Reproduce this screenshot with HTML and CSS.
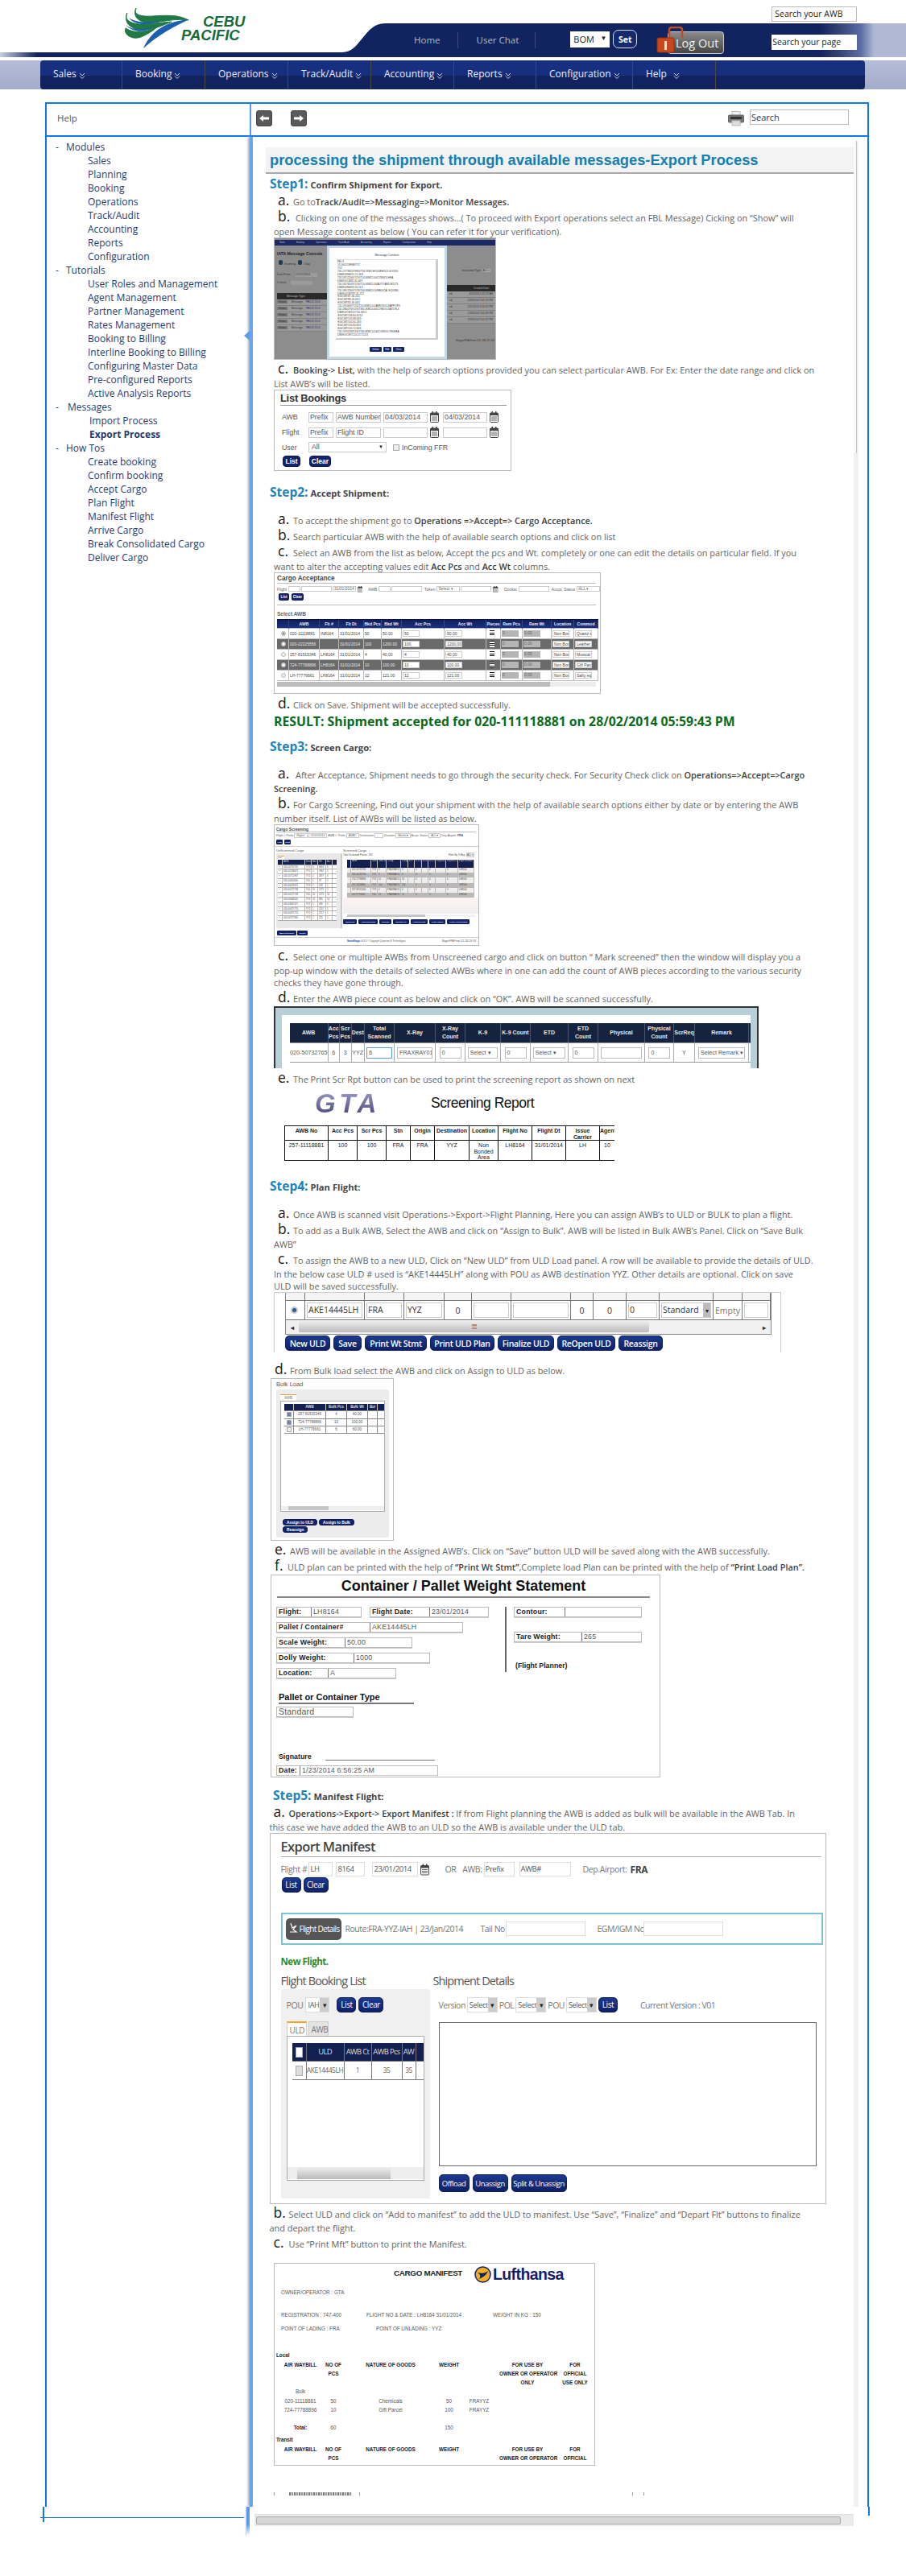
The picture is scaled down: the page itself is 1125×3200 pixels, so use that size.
FILE: index.html
```html
<!DOCTYPE html>
<html lang="en">
<head>
<meta charset="utf-8">
<title>Help - Export Process</title>
<link rel="stylesheet" href="styles.css">
</head>
<body>
<svg class="defs" width="0" height="0"><defs>
<symbol id="cal" viewBox="0 0 11 14"><rect x="0.5" y="2" width="10" height="11.5" rx="1" fill="#fff" stroke="#444"/><rect x="0.5" y="2" width="10" height="3" fill="#444"/><rect x="2.5" y="0" width="1.5" height="3.5" fill="#444"/><rect x="7" y="0" width="1.5" height="3.5" fill="#444"/><path d="M2 7h7M2 9h7M2 11h7" stroke="#666" stroke-width="1"/></symbol>
<symbol id="chev" viewBox="0 0 8 9"><path d="M1 1l3 3 3-3M1 4.5l3 3 3-3" fill="none" stroke="#cfd5ea" stroke-width="1"/></symbol>
</defs></svg>

<header class="hdr">
  <svg class="hdr-bg" width="1125" height="71" viewBox="0 0 1125 71">
    <defs>
      <linearGradient id="bar" x1="0" x2="1" y1="0" y2="0"><stop offset="0" stop-color="#c9cede"/><stop offset="0.04" stop-color="#12245f"/><stop offset="0.905" stop-color="#12245f"/><stop offset="0.925" stop-color="#34406f"/><stop offset="0.95" stop-color="#5a6ca6"/><stop offset="0.965" stop-color="#b0b8d4"/><stop offset="1" stop-color="#b0b8d4"/></linearGradient>
    </defs>
    <path d="M0 65H425C448 65 452 29 478 29H1125V71H0Z" fill="url(#bar)"/>
  </svg>
  <a class="logo">
    <svg width="180" height="70" viewBox="0 0 180 70">
      <g fill="#1f7a45" stroke="#1f7a45" stroke-width="1">
      <path d="M29 10C25 18 34 21 50 20C66 19 82 18 94 25C80 23 66 26 52 28C38 30 23 24 29 10Z"/>
      <path d="M18 16C13 25 24 31 40 30C52 29 62 28 73 27C61 32 48 38 35 37C22 36 13 28 18 16Z"/>
      <path d="M16 35C13 43 24 50 35 46C43 43 50 38 56 33C44 39 28 43 16 35Z"/>
      </g>
      <path d="M38 60C46 43 60 27 95 24C82 31 66 36 38 60Z" fill="#1b5fae"/>
      <path d="M16 31C24 37 36 38 50 33C40 41 26 41 16 31ZM20 22C30 29 44 28 60 26C46 31 28 33 20 22Z" fill="#1b5fae"/>
      <text class="logo-t" x="112" y="33">CEBU</text>
      <text class="logo-t" x="85" y="50">PACIFIC</text>
    </svg>
  </a>
  <nav class="toplinks"><a class="tl tl-a">Home</a><a class="tl tl-b">User Chat</a></nav>
  <span class="stn">BOM<i class="stn-c">▼</i></span>
  <button class="setb">Set</button>
  <div class="logout">
    <svg class="lock" width="34" height="33" viewBox="0 0 34 33"><path d="M16 14V4C16 2 17 1 19 1H29C31 1 32 2 32 4V14" fill="none" stroke="#c8481e" stroke-width="2.5"/><rect x="1" y="14" width="21" height="18" rx="2" fill="#c8481e" stroke="#8f2c0c"/><rect x="10" y="18" width="3" height="11" fill="#f5e6d8"/></svg>
    Log Out
  </div>
  <div class="searches"><div class="sbox">Search your AWB</div><div class="sbox sbox-p">Search your page</div></div>
</header>

<div class="navband">
  <nav class="nav">
    <a class="ni ni1">Sales<svg class="ch"><use href="#chev"/></svg></a>
    <a class="ni ni2">Booking<svg class="ch"><use href="#chev"/></svg></a>
    <a class="ni ni3">Operations<svg class="ch"><use href="#chev"/></svg></a>
    <a class="ni ni3">Track/Audit<svg class="ch"><use href="#chev"/></svg></a>
    <a class="ni ni3">Accounting<svg class="ch"><use href="#chev"/></svg></a>
    <a class="ni ni4">Reports<svg class="ch"><use href="#chev"/></svg></a>
    <a class="ni ni5">Configuration<svg class="ch"><use href="#chev"/></svg></a>
    <a class="ni ni4">Help<svg class="ch ch-w"><use href="#chev"/></svg></a>
  </nav>
</div>

<section class="frame">
  <div class="fr-top">
    <div class="t-left">Help</div>
    <div class="t-right">
      <button class="pg"><svg width="14" height="10" viewBox="0 0 14 10"><path d="M1 5l5-4v2.500h7v3H6V9z" fill="#fff"/></svg></button>
      <button class="pg pg2"><svg width="14" height="10" viewBox="0 0 14 10"><path d="M13 5L8 1v2.500H1v3h7V9z" fill="#fff"/></svg></button>
      <svg class="printer" width="20" height="19" viewBox="0 0 20 19"><rect x="5" y="0.500" width="10" height="6" fill="#f2f2f2" stroke="#bbb"/><rect x="0.500" y="5" width="19" height="9" rx="1" fill="#777" stroke="#666"/><rect x="3" y="7" width="14" height="3" fill="#333"/><rect x="5" y="12" width="10" height="6" fill="#ddd" stroke="#bbb"/></svg>
      <div class="tsearch">Search</div>
    </div>
  </div>
  <div class="fr-body">
    <aside class="tree">
      <div class="th">Modules</div>
      <ul class="tl-list"><li>Sales</li><li>Planning</li><li>Booking</li><li>Operations</li><li>Track/Audit</li><li>Accounting</li><li>Reports</li><li>Configuration</li></ul>
      <div class="th">Tutorials</div>
      <ul class="tl-list"><li>User Roles and Management</li><li>Agent Management</li><li>Partner Management</li><li>Rates Management</li><li>Booking to Billing</li><li>Interline Booking to Billing</li><li>Configuring Master Data</li><li>Pre-configured Reports</li><li>Active Analysis Reports</li></ul>
      <div class="th th-m">Messages</div>
      <ul class="tl-list tl-m"><li>Import Process</li><li class="cur">Export Process</li></ul>
      <div class="th">How Tos</div>
      <ul class="tl-list"><li>Create booking</li><li>Confirm booking</li><li>Accept Cargo</li><li>Plan Flight</li><li>Manifest Flight</li><li>Arrive Cargo</li><li>Break Consolidated Cargo</li><li>Deliver Cargo</li></ul>
    </aside>
    <div class="fr-div"></div>
    <main class="doc">
      <h1 class="ttl">processing the shipment through available messages-Export Process</h1>

      <h3 class="step m1"><span class="sn">Step1:</span> Confirm Shipment for Export.</h3>
      <p class="p m4"><span class="l1"><b class="mk">a.</b>Go to<strong>Track/Audit=&gt;Messaging=&gt;Monitor Messages.</strong></span></p>
      <p class="p m5"><span class="l1"><b class="mk mk-w">b.</b>Clicking on one of the messages shows...( To proceed with Export operations select an FBL Message) Cicking on “Show” will</span>open Message content as below ( You can refer it for your verification).</p>

      <div class="shot s1">
        <div class="s1-nav"><span>Sales</span><span>Booking</span><span>Operations</span><span>Track/Audit</span><span>Accounting</span><span>Reports</span><span>Configuration</span><span>Help</span></div>
        <div class="s1-grid">
          <div class="s1-l">
            <div class="s1-title">IATA Message Console</div>
            <div class="s1-ic"><i></i>Incoming <i></i>Outg</div>
            <div class="s1-f">Date From: <u>01/12/2014</u></div>
            <div class="s1-f">Criteria <u>&nbsp;</u></div>
            <div class="s1-th">Message Type</div>
            <div class="s1-tr"><b>Show</b>Message <em>FBL/3 1/LX</em></div>
            <div class="s1-tr"><b>Show</b>Message <em>FBL/3 1/LX</em></div>
            <div class="s1-tr"><b>Show</b>Message <em>FBL/3 1/LX</em></div>
            <div class="s1-tr"><b>Show</b>Message <em>FBL/3 1/LX</em></div>
            <div class="s1-tr"><b>Show</b>Message <em>FBL/3 1/LX</em></div>
          </div>
          <div class="s1-m">
            <div class="s1-mt">Message Content</div>
            <div class="s1-box">
FBL/3<br>1/LX001/19FEB/YYZ<br>YYZ<br>724-17779821YVR/0/T34.1KMC/HOUSEHOLD GOODS<br>DIM/KG/INH/21-21-26/3<br>724-18712206YYZ/0/T14.0KMC1.00/CONSOL/HEA<br>DIM/KG/CM/82-42-44/1<br>724-19176503YYZ/6/T10.0KMC0.34/AUTO AND BOLTS<br>DIM/KG/INH/32-32-21/1<br>724-16912260YYZ/6/T44.0KMC0.50/MEDICAL EQUI/BU<br>DIM/KG/CMT/87-41-11/1<br>/KG/CMT/87-34-10/1<br>/KG/CMT/88-43-40/1<br>/KG/CMT/82-44-44/1<br>724-19706307YZ/6/T24.0KMC0.01/AEROSOLS/APP/CPS<br>724-18902795YZ/6/T380.1KMC6.00/CONSOL/DATION-4<br>DIM/KG/CMT/117-90-93/12<br>/KG/CMT/108-90-91/13<br>/KG/CMT/105-88-60/3<br>/KG/CMT/105-92-28/3<br>/KG/CMT/105-80-85/1<br>/KG/CMT/105-72-60/4<br>724-19701284YZ/6/T180.0KMC14.00/CONSOL/TEDHEA<br>DIM/KG/CMT/120-117-115/3
            </div>
            <div class="s1-btns"><span>Delete</span><span>Edit</span><span>Close</span></div>
          </div>
          <div class="s1-r">
            <div class="s1-cm">munication Type: <u>ALL ▾</u></div>
            <div class="s1-th s1-th-r"><span>Created Date</span></div>
            <div class="s1-tr s1-tr-r">ed <span>3/1/2014 1:20:27 AM</span></div>
            <div class="s1-tr s1-tr-r">ed <span>2/28/2014 9:01:19 PM</span></div>
            <div class="s1-tr s1-tr-r">ed <span>2/21/2014 8:24:31 PM</span></div>
            <div class="s1-tr s1-tr-r">ed <span>2/18/2014 9:11:09 PM</span></div>
            <div class="s1-tr s1-tr-r">ed <span>2/18/2014 9:10:37 PM</span></div>
            <div class="s1-foot">Magpa/FRA From 121.182.29.118</div>
          </div>
        </div>
      </div>

      <p class="p m5"><span class="l1"><b class="mk">c.</b><strong>Booking-&gt; List,</strong> with the help of search options provided you can select particular AWB. For Ex: Enter the date range and click on</span>List AWB’s will be listed.</p>

      <div class="shot lb">
        <div class="lb-t">List Bookings</div>
        <div class="lb-r"><span>AWB</span><span class="f">Prefix</span><span class="f">AWB Number</span><span class="f">04/03/2014</span><svg class="cal"><use href="#cal"/></svg><span class="f">04/03/2014</span><svg class="cal"><use href="#cal"/></svg></div>
        <div class="lb-r"><span>Flight</span><span class="f">Prefix</span><span class="f">Flight ID</span><span class="f"></span><svg class="cal"><use href="#cal"/></svg><span class="f"></span><svg class="cal"><use href="#cal"/></svg></div>
        <div class="lb-u"><span class="lb-ul">User</span><span class="f lb-sel">All<i>▼</i></span><span class="cb"></span><span class="lb-ff">InComing FFR</span></div>
        <div class="lb-b"><button class="btn lb-b1">List</button><button class="btn lb-b2">Clear</button></div>
      </div>

      <h3 class="step m15"><span class="sn">Step2:</span> Accept Shipment:</h3>
      <p class="p m17"><span class="l1"><b class="mk">a.</b>To accept the shipment go to <strong>Operations =&gt;Accept=&gt; Cargo Acceptance.</strong></span></p>
      <p class="p m5"><span class="l1"><b class="mk">b.</b>Search particular AWB with the help of available search options and click on list</span></p>
      <p class="p m5"><span class="l1"><b class="mk">c.</b>Select an AWB from the list as below, Accept the pcs and Wt. completely or one can edit the details on particular field. If you</span>want to alter the accepting values edit <strong>Acc Pcs</strong> and <strong>Acc Wt</strong> columns.</p>

      <div class="shot ca">
        <div class="ca-t">Cargo Acceptance</div>
        <div class="ca-f"><span>Flight</span><u class="u1"></u><u class="u2"></u><u class="u3">31/01/2014</u><svg class="cal cal-s"><use href="#cal"/></svg><span>AWB</span><u class="u1"></u><u class="u2"></u><span>Token</span><u class="u3">Select ▾</u><u class="u2"></u><svg class="cal cal-s"><use href="#cal"/></svg><span>Docket</span><u class="u2"></u><span>Accpt. Status</span><u class="u3">ALL ▾</u></div>
        <div class="ca-b"><button class="btn">List</button><button class="btn">Clear</button></div>
        <div class="ca-s">Select AWB</div>
        <div class="ca-tb">
          <div class="ca-r ca-h"><span></span><span>AWB</span><span>Flt #</span><span>Flt Dt</span><span>Bkd Pcs</span><span>Bkd Wt</span><span>Acc Pcs</span><span>Acc Wt</span><span>Pieces</span><span>Rem Pcs</span><span>Rem Wt</span><span>Location</span><span>Commod</span></div>
          <div class="ca-r"><span><i class="rd rd-on"></i></span><span>020-11118881</span><span>IN8164</span><span>31/01/2014</span><span>50</span><span>50.00</span><span><u class="ci">50</u></span><span><u class="ci">50.00</u></span><span><i class="li"></i></span><span><u class="cg">0</u></span><span><u class="cg">0.00</u></span><span><u class="ci">Non Bond</u></span><span><u class="ci">Quartz and</u></span></div>
          <div class="ca-r ca-d"><span><i class="rd"></i></span><span>020-22225556</span><span></span><span>31/01/2014</span><span>100</span><span>1200.00</span><span><u class="ci">100</u></span><span><u class="ci">1200.00</u></span><span><i class="li"></i></span><span><u class="cg">0</u></span><span><u class="cg">0.00</u></span><span><u class="ci">Non Bond</u></span><span><u class="ci">Leather, lea</u></span></div>
          <div class="ca-r"><span><i class="rd"></i></span><span>257-81515346</span><span>LH8164</span><span>31/01/2014</span><span>4</span><span>40.00</span><span><u class="ci">4</u></span><span><u class="ci">40.00</u></span><span><i class="li"></i></span><span><u class="cg">0</u></span><span><u class="cg">0.00</u></span><span><u class="ci">Non Bond</u></span><span><u class="ci">Musical in</u></span></div>
          <div class="ca-r ca-d"><span><i class="rd"></i></span><span>724-77788896</span><span>LH8164</span><span>31/01/2014</span><span>10</span><span>100.00</span><span><u class="ci">10</u></span><span><u class="ci">100.00</u></span><span><i class="li"></i></span><span><u class="cg">0</u></span><span><u class="cg">0.00</u></span><span><u class="ci">Non Bond</u></span><span><u class="ci">Gift Parcel</u></span></div>
          <div class="ca-r"><span><i class="rd"></i></span><span>LH-77776661</span><span>LH8164</span><span>31/01/2014</span><span>12</span><span>121.00</span><span><u class="ci">12</u></span><span><u class="ci">121.00</u></span><span><i class="li"></i></span><span><u class="cg">0</u></span><span><u class="cg">0.00</u></span><span><u class="ci">Non Bond</u></span><span><u class="ci">Safty equip</u></span></div>
        </div>
        <div class="ca-sb"><i></i></div>
      </div>

      <p class="p m6"><span class="l1"><b class="mk">d.</b>Click on Save. Shipment will be accepted successfully.</span></p>
      <div class="result">RESULT: Shipment accepted for 020-111118881 on 28/02/2014 05:59:43 PM</div>

      <h3 class="step m9"><span class="sn">Step3:</span> Screen Cargo:</h3>
      <p class="p m17"><span class="l1"><b class="mk mk-w">a.</b>After Acceptance, Shipment needs to go through the security check. For Security Check click on <strong>Operations=&gt;Accept=&gt;Cargo</strong></span><strong>Screening.</strong></p>
      <p class="p m5"><span class="l1"><b class="mk">b.</b>For Cargo Screening, Find out your shipment with the help of available search options either by date or by entering the AWB</span>number itself. List of AWBs will be listed as below.</p>

      <div class="shot cs">
        <div class="cs-t">Cargo Screening</div>
        <div class="cs-f">Flight #:Prefix <u>Flight#</u> <u>01/01/2014</u> AWB #: Prefix <u>AWB#</u> Destination <u>&nbsp;&nbsp;&nbsp;&nbsp;&nbsp;</u> Duration <u>Month ▾</u> Accpt. Status <u>ALL ▾</u> Dep.Airport: <b>FRA</b></div>
        <div class="cs-b"><button class="btn">List</button><button class="btn">Clear</button></div>
        <div class="cs-m">
          <div class="cs-l">
            <div class="cs-h">UnScreened Cargo</div>
            <div class="cs-pan">
              <div class="cs-tab">ULD</div>
              <div class="cs-lr cs-lh"><span></span><span>AWB</span><span>Dest</span><span>Bkd</span><span>Wt</span><span>Acc</span></div>
              <div class="cs-lr"><span>□</span><span>020-50732765</span><span>YYZ</span><span>6</span><span>8063</span><span>6</span></div>
              <div class="cs-lr"><span>□</span><span>020-50738672</span><span>YYZ</span><span>1</span><span>1967</span><span>1</span></div>
              <div class="cs-lr"><span>□</span><span>020-50712967</span><span>YYZ</span><span>4</span><span>2877</span><span>4</span></div>
              <div class="cs-lr"><span>□</span><span>020-60032600</span><span>YUL</span><span>5</span><span>37</span><span>5</span></div>
              <div class="cs-lr"><span>□</span><span>020-60078371</span><span>YYZ</span><span>1</span><span>518</span><span>1</span></div>
              <div class="cs-lr"><span>□</span><span>020-60172738</span><span>YUL</span><span>10</span><span>1275</span><span>5</span></div>
              <div class="cs-lr"><span>□</span><span>020-60172738</span><span>YUL</span><span>10</span><span>1275</span><span>10</span></div>
              <div class="cs-lr"><span>□</span><span>020-60948141</span><span>YYZ</span><span>10</span><span>985</span><span>10</span></div>
              <div class="cs-lr"><span>□</span><span>020-63847471</span><span>YYZ</span><span>5</span><span>489</span><span>5</span></div>
              <div class="cs-lr"><span>□</span><span>020-60475770</span><span>YYZ</span><span>1</span><span>2517</span><span>1</span></div>
              <div class="cs-lr"><span>□</span><span>020-60475770</span><span>YYZ</span><span>1</span><span>2517</span><span>1</span></div>
              <div class="cs-lr"><span>□</span><span>020-60757965</span><span>YYZ</span><span>1</span><span>125</span><span>1</span></div>
            </div>
            <div class="cs-bb"><button class="btn">Mark Screened</button><button class="btn">Reject</button></div>
          </div>
          <div class="cs-rt">
            <div class="cs-h">Screened Cargo</div>
            <div class="cs-tot"><span>Total Screened Pieces: 132</span><span>Filter By X-Ray: <u>ALL ▾</u></span></div>
            <div class="cs-tw">
              <div class="cs-rr cs-rh"><span></span><span>AWB</span><span>Dest</span><span>Total Scanned</span><span>X-Ray</span><span>X-Ray Count</span><span>K-9</span><span>K-9 Count</span><span>ETD</span><span>ETD Count</span><span>Physical</span><span>Physical Count</span><span>Flight Number</span></div>
              <div class="cs-rr"><span>□</span><span>020-50732765</span><span>YYZ</span><span>3</span><span>FRAXRAY01</span><span>3</span><span></span><span>0</span><span></span><span>0</span><span></span><span>0</span><span>LH8164</span></div>
              <div class="cs-rr cs-g"><span>□</span><span>020-50732765</span><span>YYZ</span><span>3</span><span>FRAXRAY01</span><span>3</span><span></span><span>0</span><span></span><span>0</span><span></span><span>0</span><span>LH8164</span></div>
              <div class="cs-rr"><span>□</span><span>724-77788896</span><span>YYZ</span><span>10</span><span>FRAXRAY01</span><span>10</span><span></span><span>0</span><span></span><span>0</span><span></span><span>0</span><span>LH8164</span></div>
              <div class="cs-rr cs-g"><span>□</span><span>257-11118881</span><span>YYZ</span><span>100</span><span>FRAXRAY01</span><span>100</span><span></span><span>0</span><span></span><span>0</span><span></span><span>0</span><span>LH8164</span></div>
              <div class="cs-rr"><span>□</span><span>257-81515346</span><span>YYZ</span><span>4</span><span>FRAXRAY01</span><span>4</span><span></span><span>0</span><span></span><span>0</span><span></span><span>0</span><span>LH8164</span></div>
              <div class="cs-rr cs-g"><span>□</span><span>LH-77776661</span><span>YUL</span><span>12</span><span>FRAXRAY01</span><span>12</span><span></span><span>0</span><span></span><span>0</span><span></span><span>0</span><span>LH8164</span></div>
            </div>
            <div class="cs-pale"></div>
            <div class="cs-sb"><i></i></div>
            <div class="cs-bb cs-bb2"><button class="btn">Unscreen</button><button class="btn">Add Screening</button><button class="btn">ReScan</button><button class="btn">Upload File</button><button class="btn">Print Scr Rpt</button><button class="btn">Print Labels</button><button class="btn">Print Accpt Details</button></div>
          </div>
        </div>
        <div class="cs-foot"><span><b>SmartKargo</b> v3.8.3 © Copyright Quantum-iS Technologies</span><span>Magpa/FRA From 121.182.29.118</span></div>
      </div>

      <p class="p m6"><span class="l1"><b class="mk">c.</b>Select one or multiple AWBs from Unscreened cargo and click on button “ Mark screened” then the window will display you a</span>pop-up window with the details of selected AWBs where in one can add the count of AWB pieces according to the various security<br>checks they have gone through.</p>
      <p class="p m5"><span class="l1"><b class="mk">d.</b>Enter the AWB piece count as below and click on “OK”. AWB will be scanned successfully.</span></p>

      <div class="scan">
        <div class="scan-in">
          <div class="sc-r sc-h"><span>AWB</span><span>Acc Pcs</span><span>Scr Pcs</span><span>Dest</span><span>Total Scanned</span><span>X-Ray</span><span>X-Ray Count</span><span>K-9</span><span>K-9 Count</span><span>ETD</span><span>ETD Count</span><span>Physical</span><span>Physical Count</span><span>ScrReq</span><span>Remark</span></div>
          <div class="sc-r"><span>020-50732765</span><span>6</span><span>3</span><span>YYZ</span><span><u class="sf sf-on">6</u></span><span><u class="sf">FRAXRAY01 ▾</u></span><span><u class="sf sf-l">0</u></span><span><u class="sf">Select ▾</u></span><span><u class="sf sf-l">0</u></span><span><u class="sf">Select ▾</u></span><span><u class="sf sf-l">0</u></span><span><u class="sf"></u></span><span><u class="sf sf-l">0</u></span><span>Y</span><span><u class="sf">Select Remark ▾</u></span></div>
        </div>
      </div>

      <p class="p m6"><span class="l1"><b class="mk">e.</b>The Print Scr Rpt button can be used to print the screening report as shown on next</span></p>

      <div class="gta">
        <div class="gta-h"><span class="gta-l">GTA</span><span class="gta-s">Screening Report</span></div>
        <div class="gta-t">
          <div class="gt-r gt-h"><span>AWB No</span><span>Acc Pcs</span><span>Scr Pcs</span><span>Stn</span><span>Origin</span><span>Destination</span><span>Location</span><span>Flight No</span><span>Flight Dt</span><span>Issue Carrier</span><span>Agent</span></div>
          <div class="gt-r gt-b"><span>257-11118881</span><span>100</span><span>100</span><span>FRA</span><span>FRA</span><span>YYZ</span><span>Non Bonded Area</span><span>LH8164</span><span>31/01/2014</span><span>LH</span><span>10</span></div>
        </div>
      </div>

      <h3 class="step m18"><span class="sn">Step4:</span> Plan Flight:</h3>
      <p class="p m17"><span class="l1"><b class="mk">a.</b>Once AWB is scanned visit Operations-&gt;Export-&gt;Flight Planning, Here you can assign AWB’s to ULD or BULK to plan a flight.</span></p>
      <p class="p m5"><span class="l1"><b class="mk">b.</b>To add as a Bulk AWB, Select the AWB and click on “Assign to Bulk”. AWB will be listed in Bulk AWB’s Panel. Click on “Save Bulk</span>AWB”</p>
      <p class="p m5"><span class="l1"><b class="mk">c.</b>To assign the AWB to a new ULD, Click on “New ULD” from ULD Load panel. A row will be available to provide the details of ULD.</span>In the below case ULD # used is “AKE14445LH” along with POU as AWB destination YYZ. Other details are optional. Click on save<br>ULD will be saved successfully.</p>

      <div class="uld">
        <div class="uld-tb">
          <div class="ul-r ul-cut"><span></span><span></span><span></span><span></span><span></span><span></span><span></span><span></span><span></span><span></span><span></span><span></span><span></span></div>
          <div class="ul-r"><span><i class="rd rd-b"></i></span><span><u class="uf">AKE14445LH</u></span><span><u class="uf">FRA</u></span><span><u class="uf">YYZ</u></span><span class="uc">0</span><span><u class="uf"></u></span><span><u class="uf"></u></span><span class="uc">0</span><span class="uc">0</span><span><u class="uf">0</u></span><span><u class="uf ud">Standard<i>▾</i></u></span><span class="uc ug">Empty</span><span><u class="uf"></u></span></div>
          <div class="ul-sb"><b>◂</b><i>⦙⦙⦙</i><b>▸</b></div>
        </div>
        <div class="ul-b"><button class="btn2 b1">New ULD</button><button class="btn2 b2">Save</button><button class="btn2 b3">Print Wt Stmt</button><button class="btn2 b4">Print ULD Plan</button><button class="btn2 b5">Finalize ULD</button><button class="btn2 b6">ReOpen ULD</button><button class="btn2 b7">Reassign</button></div>
      </div>

      <p class="p m15 sh"><span class="l1"><b class="mk">d.</b>From Bulk load select the AWB and click on Assign to ULD as below.</span></p>

      <div class="shot bl">
        <div class="bl-t">Bulk Load</div>
        <div class="bl-p">
          <div class="bl-tab">AWB</div>
          <div class="bl-g">
            <div class="bl-r bl-h"><span></span><span>AWB</span><span>Bulk Pcs</span><span>Bulk Wt</span><span>Bui</span></div>
            <div class="bl-r"><span><i class="ck ck-on"></i></span><span>257-81515346</span><span>4</span><span>40.00</span><span></span></div>
            <div class="bl-r"><span><i class="ck ck-on"></i></span><span>724-77788896</span><span>10</span><span>100.00</span><span></span></div>
            <div class="bl-r"><span><i class="ck"></i></span><span>LH-77776661</span><span>6</span><span>60.00</span><span></span></div>
            <div class="bl-sb"><i></i></div>
          </div>
          <div class="bl-b"><button class="btn">Assign to ULD</button><button class="btn">Assign to Bulk</button><button class="btn">Reassign</button></div>
        </div>
      </div>

      <p class="p m5 sh"><span class="l1"><b class="mk">e.</b>AWB will be available in the Assigned AWB’s. Click on “Save” button ULD will be saved along with the AWB successfully.</span></p>
      <p class="p m5 sh"><span class="l1"><b class="mk mk-n">f.</b>ULD plan can be printed with the help of <strong>“Print Wt Stmt”</strong>,Complete load Plan can be printed with the help of <strong>“Print Load Plan”.</strong></span></p>

      <div class="shot wt">
        <div class="wt-t">Container / Pallet Weight Statement</div>
        <div class="wt-m">
          <div class="wt-l">
            <div class="wt-row"><span class="wf wf-f"><b>Flight:</b>LH8164</span><span class="wf wf-d"><b>Flight Date:</b>23/01/2014</span></div>
            <div class="wt-row"><span class="wf wf-p"><b>Pallet / Container#</b>AKE14445LH</span></div>
            <div class="wt-row"><span class="wf wf-s"><b>Scale Weight:</b>50.00</span></div>
            <div class="wt-row"><span class="wf wf-o"><b>Dolly Weight:</b>1000</span></div>
            <div class="wt-row"><span class="wf wf-c"><b>Location:</b>A</span></div>
          </div>
          <div class="wt-r">
            <span class="wf wf-n"><b>Contour:</b></span>
            <span class="wf wf-r"><b>Tare Weight:</b>265</span>
            <strong class="wt-fp">(Flight Planner)</strong>
          </div>
        </div>
        <div class="wt-h">Pallet or Container Type</div>
        <div class="wf wf-st">Standard</div>
        <div class="wt-sig"><b>Signature</b><i></i></div>
        <div class="wf wf-dt"><b>Date:</b>1/23/2014 6:56:25 AM</div>
      </div>

      <h3 class="step m11 st-s"><span class="sn">Step5:</span> Manifest Flight:</h3>
      <p class="p m4 sh5"><span class="l1"><b class="mk mk-5"><em>a.</em></b><strong>Operations-&gt;Export-&gt; Export Manifest :</strong> If from Flight planning the AWB is added as bulk will be available in the AWB Tab. In</span>this case we have added the AWB to an ULD so the AWB is available under the ULD tab.</p>

      <div class="shot em">
        <div class="em-t">Export Manifest</div>
        <div class="em-f"><span class="g">Flight #</span><u class="ef e1">LH</u><u class="ef e2">8164</u><u class="ef e3">23/01/2014</u><svg class="cal cal-l"><use href="#cal"/></svg><span class="g e-or">OR</span><span class="g e-aw">AWB:</span><u class="ef e4">Prefix</u><u class="ef e5">AWB#</u><span class="g e-dp">Dep.Airport:</span><b class="e-fra">FRA</b></div>
        <div class="em-b"><button class="btn2 eb1">List</button><button class="btn2 eb2">Clear</button></div>
        <div class="em-fd"><span class="em-pill"><svg width="11" height="16" viewBox="0 0 11 16"><path d="M2 1l2 6 5-3-4 5 4 3H1" fill="none" stroke="#fff" stroke-width="1.200"/></svg>Flight Details</span><span class="g em-rt">Route:FRA-YYZ-IAH | 23/Jan/2014</span><span class="g em-tl">Tail No</span><u class="ef e6"></u><span class="g em-eg">EGM/IGM No.</span><u class="ef e6"></u></div>
        <div class="em-nf">New Flight.</div>
        <div class="em-hd"><span class="h1">Flight Booking List</span><span>Shipment Details</span></div>
        <div class="em-m">
          <div class="em-l">
            <div class="em-pou"><span class="g">POU</span><span class="esel e-s1">IAH<i>▾</i></span><button class="btn2 eb1 e-lb">List</button><button class="btn2 eb2">Clear</button></div>
            <div class="em-tabs"><span class="on">ULD</span><span>AWB</span></div>
            <div class="em-g">
              <div class="eg-r eg-h"><span><i class="ck ck-w"></i></span><span>ULD</span><span>AWB Ct</span><span>AWB Pcs</span><span>AW</span></div>
              <div class="eg-r"><span><i class="ck ck-g"></i></span><span>AKE14445LH</span><span>1</span><span>35</span><span>35</span></div>
              <div class="eg-sb"><i></i></div>
            </div>
          </div>
          <div class="em-rr">
            <div class="em-v"><span class="g">Version</span><span class="esel">Select<i>▾</i></span><span class="g">POL</span><span class="esel">Select<i>▾</i></span><span class="g">POU</span><span class="esel">Select<i>▾</i></span><button class="btn2 eb1">List</button><span class="g em-cv">Current Version : V01</span></div>
            <div class="em-box"></div>
            <div class="em-bb"><button class="btn2 eb3">Offload</button><button class="btn2 eb4">Unassign</button><button class="btn2 eb5">Split &amp; Unassign</button></div>
          </div>
        </div>
      </div>

      <p class="p m5 sh5"><span class="l1"><b class="mk mk-5"><em>b.</em></b>Select ULD and click on “Add to manifest” to add the ULD to manifest. Use “Save”, “Finalize” and “Depart Flt” buttons to finalize</span>and depart the flight.</p>
      <p class="p m5 sh5"><span class="l1"><b class="mk mk-5"><em>c.</em></b>Use “Print Mft” button to print the Manifest.</span></p>

      <div class="shot mf">
        <div class="mf-top"><b class="mf-ti">CARGO MANIFEST</b><svg class="mf-lg" width="21" height="21" viewBox="0 0 21 21"><circle cx="10.500" cy="10.500" r="9.500" fill="#f2b01e" stroke="#141e6e" stroke-width="1.500"/><path d="M4 8C8 9 12 10 17 6C15 12 10 14 6 16C8 13 8 11 4 8Z" fill="#141e6e"/></svg><span class="mf-lu">Lufthansa</span></div>
        <div class="mf-own">OWNER/OPERATOR : GTA</div>
        <div class="mf-l1"><span class="a1">REGISTRATION : 747-400</span><span class="a2">FLIGHT NO &amp; DATE : LH8164 31/01/2014</span><span>WEIGHT IN KG : 150</span></div>
        <div class="mf-l2"><span class="a3">POINT OF LADING : FRA</span><span>POINT OF UNLADING : YYZ</span></div>
        <div class="mf-sec mf-s1">Local</div>
        <div class="mf-g mf-gh"><span>AIR WAYBILL</span><span>NO OF<br>PCS</span><span>NATURE OF GOODS</span><span>WEIGHT</span><span></span><span>FOR USE BY<br>OWNER OR OPERATOR<br>ONLY</span><span>FOR<br>OFFICIAL<br>USE ONLY</span></div>
        <div class="mf-g mf-bk"><span>Bulk</span></div>
        <div class="mf-g"><span>020-11118881</span><span>50</span><span>Chemicals</span><span>50</span><span>FRAYYZ</span></div>
        <div class="mf-g"><span>724-77788896</span><span>10</span><span>Gift Parcel</span><span>100</span><span>FRAYYZ</span></div>
        <div class="mf-g mf-tt"><span><b>Total:</b></span><span>60</span><span></span><span>150</span></div>
        <div class="mf-sec">Transit</div>
        <div class="mf-g mf-gh"><span>AIR WAYBILL</span><span>NO OF<br>PCS</span><span>NATURE OF GOODS</span><span>WEIGHT</span><span></span><span>FOR USE BY<br>OWNER OR OPERATOR<br>ONLY</span><span>FOR<br>OFFICIAL<br>USE ONLY</span></div>
      </div>
      <div class="bits"><i class="b-a"></i><i class="b-b"></i><i class="b-a b-c"></i><i class="b-a b-d"></i><i class="b-a b-e"></i></div>
    </main>
    <div class="vs"><i></i></div>
  </div>
</section>

<footer class="foot">
  <div class="foot-l"></div>
  <div class="foot-d"></div>
  <div class="hs"><i></i></div>
  <div class="foot-r"></div>
</footer>
</body>
</html>
```

FILE: styles.css
```css
*{box-sizing:border-box}
html,body{margin:0;padding:0;background:#fff}
body{font-family:"Open Sans","Noto Sans",sans-serif;width:1125px;height:3200px;overflow:hidden}
.defs{position:absolute}
button{font-family:inherit;padding:0;cursor:default}
ul{list-style:none;margin:0;padding:0}
i,em{font-style:normal}
u{text-decoration:none}

/* header */
.hdr{position:relative;display:flex;height:75px}
.hdr-bg{position:absolute;left:0;top:0}
.hdr>*:not(.hdr-bg){position:relative}
.logo{flex:none;width:180px;height:70px;margin-left:140px;display:block}
.logo svg{display:block}
.logo-t{font:italic 700 18.500px "Liberation Sans",sans-serif;fill:#176b3c}
.toplinks{display:flex;margin:40px 0 0 194px;height:20px;flex:none}
.tl{font-size:11.500px;line-height:19px;color:#b9b9b9;border-right:1px solid #3a4a80}
.tl-a{padding-right:21px}
.tl-b{padding:0 20px 0 23px}
.stn{flex:none;margin:39px 0 0 43px;width:49px;height:20px;background:#fff;font-size:11px;line-height:20px;padding-left:4px;color:#222;display:flex;justify-content:space-between}
.stn-c{font-size:8px;margin-right:4px;line-height:16px}
.setb{flex:none;margin:37px 0 0 4px;width:30px;height:23px;border:1px solid #d6dcf0;border-radius:7px;background:#14296e;color:#fff;font-weight:700;font-size:10.500px}
.logout{flex:none;margin:39px 0 0 38px;width:70px;height:28px;background:linear-gradient(#8a8a8a,#454545);border:1px solid #ccc;border-radius:4px;color:#f2f2f2;font-size:14.500px;line-height:27px;text-align:right;padding-right:6px;white-space:nowrap}
.lock{position:absolute;left:-15px;top:-7px}
.searches{flex:none;margin-left:59px;width:106px;display:flex;flex-direction:column}
.sbox{margin-top:8px;height:19px;border:1px solid #bbb;background:#fff;font-size:10.500px;line-height:17px;padding-left:3px;color:#222;white-space:nowrap}
.sbox-p{margin-top:16px;border-color:#fff;padding-left:0}

.navband{height:36px;padding-left:50px;background:linear-gradient(#b5bcd7,#a3accb)}
.nav{display:flex;width:1024px;height:36px;border-radius:4px;overflow:hidden;background:linear-gradient(#16307f 0,#16307f 52%,#10235f 52%,#10235f 100%)}
.ni{flex:none;height:36px;padding-left:16px;border-right:1px solid #4c4a3e;color:#e8ecf6;font-size:12px;line-height:33px;white-space:nowrap}
.ni1{width:102px}.ni2{width:103px}.ni3{width:103px}.ni4{width:103px}.ni5{width:120px}
.nav .ni:nth-child(6){width:102px}
.ch{width:8px;height:9px;margin-left:3px;vertical-align:-3px}
.ch-w{margin-left:8px}

/* frame */
.frame{margin:16px 0 0 56px;width:1023px;border:2px solid #0a78f5;border-width:2px 2px 0}
.fr-top{display:flex;height:41px;border-bottom:2px solid #0a78f5}
.t-left{width:252px;font-size:11.500px;line-height:35px;padding-left:13px;color:#555}
.t-right{flex:1;display:flex;align-items:flex-start;border-left:2px solid #5a9ae8;padding:8px 0 0 6px}
.pg{width:20px;height:20px;border:1px solid #444;border-radius:3px;background:#5a5a5a;display:flex;align-items:center;justify-content:center;margin-top:0}
.pg2{margin-left:23px}
.printer{margin-left:523px;margin-top:1px}
.tsearch{margin-left:7px;width:123px;height:19px;margin-top:-1px;border:1px solid #bbb;font-size:11px;line-height:17px;padding-left:1px;color:#333}

.fr-body{display:flex;height:2944px}
.tree{flex:none;width:252px;padding-top:4px;font-size:12px;line-height:17px;color:#1f3a6e;white-space:nowrap}
.th{padding-left:24px;position:relative}
.th::before{content:"-";position:absolute;left:11px;top:0}
.th-m{padding-left:26px}
.tl-list{padding-left:51px}
.tl-m{padding-left:53px}
.cur{font-weight:700}
.fr-div{flex:none;width:4px;background:#6aa6ee;box-shadow:-2px 0 3px #aaa;position:relative}
.fr-div::before{content:"";position:absolute;left:-7px;top:241px;border:6px solid transparent;border-right:7px solid #5b9be8;border-left:0}
.doc{flex:none;width:746px;padding:13px 0 0 16px;overflow:hidden}
.vs{flex:none;width:6px;background:#f1f1f1;margin-top:5px}
.vs i{display:block;height:388px;width:4px;border-right:1px solid #c4c4c4;background:#f8f8f8}

.ttl{margin:0;width:730px;height:33px;background:#f3f3f3;border-bottom:2px solid #aaa;font:700 18.300px/31px "Liberation Sans",sans-serif;color:#137fb4;padding-left:5px;white-space:nowrap}
.step{margin:0 0 0 5px;height:22px;line-height:22px;font-size:11.200px;font-weight:700;color:#444;white-space:nowrap}
.sn{font-size:15.500px;color:#1a84bc}
.p{margin:0 0 0 10px;font-size:10.900px;line-height:15px;color:#626262;white-space:nowrap}
.p strong{color:#404040;font-weight:600}
.l1{display:block;margin-bottom:2px;padding-left:5px}
.mk{display:inline-block;width:19px;font-size:17.500px;line-height:0;font-weight:400;color:#1a1a1a;vertical-align:baseline}
.mk-w{width:22px}
.mk-n{width:16px}
.mk-5{width:19px}
.m1{margin-top:1px}.m4{margin-top:4px}.m5{margin-top:5px}.m6{margin-top:6px}.m9{margin-top:9px}.m11{margin-top:11px}.m15{margin-top:15px}.m17{margin-top:17px}.m18{margin-top:18px}
.sh{margin-left:6px}
.sh5{margin-left:4.500px}
.st-s{margin-left:9px}
.result{margin-left:10px;height:22px;font-size:15.800px;font-weight:700;line-height:22px;color:#0b6a1c;white-space:nowrap}

.shot{margin-left:10px;background:#fff;border:1px solid #bbb;overflow:hidden;font-family:"Liberation Sans",sans-serif;color:#444;white-space:nowrap}
.btn{display:inline-block;background:#12246e;border:1px solid #0d1a55;border-radius:3px;color:#fff;font-weight:700}
.btn2{display:block;flex:none;background:linear-gradient(#1b3a8f,#0f2165);border:1px solid #0e1f63;border-radius:5px;color:#fff;font-family:"Open Sans",sans-serif;white-space:nowrap}
.cal{width:11px;height:14px;display:block}

/* shot 1 */
.s1{width:276px;height:152px;background:#8d8d8d;padding-top:2px}
.s1-nav{height:7px;background:#1b2a66;display:flex;gap:14px;padding-left:6px;font-size:2.800px;line-height:6px;color:#bbb}
.s1-grid{display:grid;grid-template-columns:65px 149px 60px;height:141px}
.s1-l{padding:7px 0 0 3px;color:#333;font-size:3.500px}
.s1-title{font-size:5.200px;font-weight:700;line-height:6px;color:#222}
.s1-ic{margin-top:5px;height:7px;line-height:7px}
.s1-ic i{display:inline-block;width:5px;height:6px;background:#233a55;border-radius:2px;margin:0 2px}
.s1-f{margin-top:9px;height:5px;line-height:5px}
.s1-f+.s1-f{margin-top:5px}
.s1-f u{display:inline-block;width:27px;height:5px;background:#9b9b9b;margin-left:5px}
.s1-th{margin-top:10px;height:8px;background:#2a2a2a;color:#bbb;line-height:8px;padding-left:12px}
.s1-tr{height:8px;line-height:7px;background:#9a9a9a;border-bottom:1px solid #808080}
.s1-tr b{font-weight:400;background:#777;padding:0 2px;margin-right:5px}
.s1-tr em{color:#1b2a80;margin-left:3px}
.s1-m{background:#fff;border:3px solid #c5d9e4;margin-top:0;padding:7px 8px 0;position:relative}
.s1-mt{text-align:center;font-size:3.800px;line-height:5px;color:#333}
.s1-box{margin-top:2px;height:100px;border-top:1px solid #ddd;border-right:3px solid #ccc;border-bottom:2px solid #ccc;padding:1px 0 0 2px;font-size:3px;line-height:3.950px;color:#333}
.s1-btns{display:flex;justify-content:center;gap:2px;margin-top:9px}
.s1-btns span{background:#12246e;color:#fff;font-size:2.800px;line-height:6px;padding:0 3px;border-radius:1px}
.s1-r{padding-top:29px;font-size:3.200px;color:#333}
.s1-cm{text-align:right;padding-right:6px;height:5px;line-height:5px}
.s1-cm u{background:#aaa;padding:0 1px}
.s1-th-r{margin:15px 0 0;text-align:right;padding:0 8px 0 0}
.s1-tr-r{display:flex;justify-content:space-between;padding:0 3px}
.s1-foot{margin-top:19px;text-align:right;color:#333;padding-right:1px}

/* list bookings */
.lb{width:295px;height:101px;color:#555;font-size:9.500px}
.lb-t{margin:4px 0 0 7px;width:281px;height:15px;border-bottom:1px solid #999;font-size:12.800px;font-weight:700;line-height:12px;color:#333;letter-spacing:-.2px}
.lb-r{display:grid;grid-template-columns:33px 34px 59px 58px 16px 58px 11px;align-items:center;margin:7px 0 0 9px;height:13px;font-size:8.800px}
.lb-r+.lb-r{margin-top:6px}
.f{display:block;height:13px;margin-right:3px;border:1px solid #ccc;background:#fff;line-height:11px;padding-left:1px;color:#555}
.lb-u{display:flex;align-items:center;margin:6px 0 0 9px;height:13px;font-size:8.800px}
.lb-ul{width:33px}
.lb-sel{width:97px;display:flex;justify-content:space-between;padding:0 3px;margin-right:8px}
.lb-sel i{font-size:6px;color:#222}
.cb{width:8px;height:8px;border:1px solid #aaa;background:#eee;margin-right:3px}
.lb-b{display:flex;margin:4px 0 0 10px}
.lb-b .btn{height:14px;font-size:8.500px;border-radius:4px}
.lb-b1{width:22px}
.lb-b2{width:27px;margin-left:11px}

/* cargo acceptance */
.ca{width:406px;height:151px;font-size:5.500px}
.ca-t{margin:2px 0 0 3px;width:396px;height:11px;border-bottom:1px solid #bbb;font-size:8.200px;font-weight:700;line-height:9px;color:#444}
.ca-f{display:flex;align-items:center;gap:1px;margin:3px 0 0 3px;height:7px;font-size:5px;color:#666}
.ca-f u{display:block;height:7px;border:1px solid #ccc;line-height:5px;padding-left:1px}
.u1{width:15px}.u2{width:40px}.u3{width:30px}
.cal-s{width:7px;height:8px;margin:0 4px 0 1px}
.ca-f span{margin-right:1px}
.ca-f span:nth-of-type(n+2){margin-left:2px}
.ca-b{display:flex;gap:3px;margin:2px 0 0 5px}
.ca-b .btn{height:9px;width:13px;font-size:4.500px;line-height:6px;border-radius:2px}
.ca-b .btn+.btn{width:15px}
.ca-s{margin:5px 0 0 3px;padding-top:8px;width:396px;border-top:1px solid #bbb;font-size:6.500px;font-weight:700;line-height:6px;color:#666}
.ca-tb{margin:3px 0 0 3px;width:399px;overflow:hidden}
.ca-r{display:grid;grid-template-columns:15px 38px 24px 31px 22px 25px 53px 52px 18px 27px 36px 28px 30px;height:13px;align-items:center;border-bottom:1px solid #bbb;color:#444;background:#fff;font-size:5px}
.ca-r>span{display:block;height:13px;line-height:12px;padding-left:1px;border-right:1px solid #bbb;overflow:hidden;white-space:nowrap}
.ca-h{background:linear-gradient(#0f1f5c,#1b3284);color:#eee;font-weight:700;height:12px;border-top:1px solid #0b1440;font-size:5.100px}
.ca-h>span{text-align:center;border-right-color:#39487c;height:11px;line-height:10px;padding:0}
.ca-d{background:#6a6a6a;color:#eee}
.ci{display:block;width:21px;height:8px;margin-top:2px;line-height:7px;background:#fff;border:1px solid #ccc;color:#444;padding-left:1px;overflow:hidden}
.cg{display:block;width:21px;height:8px;margin-top:2px;background:#b5b5b5;line-height:7px;padding-left:1px;color:#666}
.rd{display:block;width:6px;height:6px;border-radius:50%;border:1px solid #bbb;background:#eee;margin:3px 0 0 4px}
.rd-on{background:#666;box-shadow:inset 0 0 0 1px #eee}
.li{display:block;width:6px;height:8px;margin:2px 0 0 3px;background:repeating-linear-gradient(#111 0 1px,#fff 1px 2.500px)}
.ca-sb{margin:1px 0 0 3px;height:6px;width:396px;background:#ececec}
.ca-sb i{display:block;width:339px;height:6px;background:#bcbcbc}

/* cargo screening */
.cs{width:255px;height:151px;font-size:3.500px}
.cs-t{margin:2px 0 0 2px;height:7px;width:248px;border-bottom:1px solid #bbb;font-size:5px;font-weight:700;line-height:6px;color:#444}
.cs-f{margin:1px 0 0 2px;height:7px;line-height:7px;color:#555;font-size:3.500px}
.cs-f u{border:1px solid #ccc;padding:0 2px}
.cs-b{display:flex;gap:2px;margin:1px 0 0 2px;height:6px}
.cs-b .btn{width:8px;height:6px;font-size:2.500px;line-height:3px;border-radius:1px}
.cs-m{display:flex;margin-top:2px;border-top:1px solid #ccc;padding-top:2px}
.cs-l{width:85px;padding-left:2px}
.cs-h{font-size:4px;line-height:6px;color:#555}
.cs-pan{width:82px;height:93px;background:#e8e8e8;padding:3px 5px 0 2px;border-right:2px solid #ccc}
.cs-tab{width:8px;height:5px;background:#fff;border-top:1px solid #f0a030;font-size:2.500px;line-height:4px}
.cs-lr{display:grid;grid-template-columns:6px 28px 8px 8px 10px 8px;height:5.800px;border-bottom:1px solid #aaa;background:#fff;font-size:2.800px;line-height:5px;overflow:hidden}
.cs-lr>span{border-right:1px solid #bbb;padding-left:1px}
.cs-lh{background:#14204f;color:#ddd;height:6.500px}
.cs-bb{display:flex;gap:1px;margin:3px 0 0 1px}
.cs-bb .btn{height:6px;font-size:2.500px;line-height:3px;padding:0 2px;border-radius:1px}
.cs-rt{flex:1;width:168px}
.cs-tot{display:flex;justify-content:space-between;padding:0 5px 0 0;line-height:5px;height:8px;font-size:3px}
.cs-tot u{background:#eee;border:1px solid #ccc}
.cs-tw{margin-left:5px;width:158px}
.cs-rr{display:grid;grid-template-columns:5px 25px 8px 11px 18px 9px 8px 9px 8px 9px 13px 15px 20px;height:6.200px;font-size:2.700px;line-height:5.500px;background:#eee;overflow:hidden;color:#444}
.cs-rr>span{border-right:1px solid #bbb;padding-left:1px;overflow:hidden}
.cs-rh{height:10px;background:#14204f;color:#ddd;line-height:3.500px}
.cs-g{background:#bdb8b8}
.cs-pale{height:20px;background:linear-gradient(#fff3f3,#efefef)}
.cs-sb{height:3px;background:#f2f2f2;margin:1px 0 0 5px;width:160px}
.cs-sb i{display:block;width:97px;height:3px;background:#c4c4c4}
.cs-bb2{margin:3px 0 0 0;gap:2px}
.cs-foot{display:flex;justify-content:space-between;padding:2px 3px 0 90px;font-size:2.800px;color:#555;border-top:1px solid #ccc;margin-top:2px}
.cs-foot b{color:#1c3f8a}

/* scan */
.scan{margin-left:10px;width:602px;height:77px;background:#b8cfda;border:2px solid #333;border-bottom:0;padding:9px 8px 0;overflow:hidden;font-family:"Liberation Sans",sans-serif}
.scan-in{background:#fff;height:66px;padding:10px 0 0 10px;margin-left:0}
.sc-r{display:grid;grid-template-columns:47.500px 14.500px 14.500px 16.500px 37px 51px 37px 44px 37px 47px 37px 58px 36px 26px 67px;height:24px;font-size:7.200px;color:#555;border-bottom:1px solid #999;align-items:center;text-align:center}
.sc-r>span{height:100%;display:flex;align-items:center;justify-content:center;border-right:1px solid #aaa;line-height:10px;white-space:normal;overflow:hidden}
.sc-h{height:25px;background:#15233f;color:#e8e8e8;font-weight:700;font-size:7px}
.sc-h>span{border-right-color:#4a5470}
.sf{display:block;width:88%;height:14px;line-height:12px;border:1px solid #bbb;text-align:left;padding-left:2px;white-space:nowrap;overflow:hidden;background:#fff}
.sf-on{border-color:#5b9be8}
.sf-l{width:75%}

/* gta */
.gta{margin-left:10px;width:423px;height:91px;font-family:"Liberation Sans",sans-serif;margin-top:5px;overflow:hidden}
.gta-h{display:flex;align-items:center;height:45px;padding:0 0 10px 51px}
.gta-l{flex:none;width:144px;font-size:33px;font-weight:700;font-style:italic;letter-spacing:4.500px;background:linear-gradient(#a3a2cc,#3f3e70);-webkit-background-clip:text;background-clip:text;color:transparent}
.gta-s{font-size:17.500px;color:#111;letter-spacing:-.5px}
.gta-t{margin-left:13px;border-top:1.500px solid #111;border-bottom:1.500px solid #111;width:410px;border-left:1.500px solid #111}
.gt-r{display:grid;grid-template-columns:54px 36px 36px 30px 30px 43px 36px 42px 42px 42px 18px;font-size:7px;color:#222;text-align:center;line-height:7.500px}
.gt-r>span{border-right:1.500px solid #111;padding-top:2px;overflow:hidden;white-space:normal}
.gt-h{height:18px;font-weight:700;border-bottom:1.500px solid #111}
.gt-b{height:24px}
.gt-r>span:last-child{border-right:0;white-space:nowrap}

/* uld */
.uld{margin-left:10px;width:630px;height:75px;border:1px solid #ccc;border-width:1px 1px 0;padding:0 0 0 13px;font-family:"Open Sans",sans-serif;overflow:hidden}
.uld-tb{width:604px;border:1px solid #888;border-width:0 1px 1px}
.ul-r{display:grid;grid-template-columns:24px 74px 49px 50px 34px 49px 74px 28px 41px 41px 67px 36px 35px;height:24px;border-bottom:1px solid #777;align-items:center;font-size:10.500px;color:#333}
.ul-cut{height:10px;background:#f4f4f4}
.ul-r>span{height:100%;border-right:1px solid #777;display:flex;align-items:center;padding-left:2px;overflow:hidden}
.uc{justify-content:center;padding-left:0!important}
.ug{color:#777}
.uf{display:flex;width:calc(100% - 2px);height:19px;line-height:17px;border:1px solid #ccc;padding-left:1px;white-space:nowrap}
.ud{justify-content:space-between}
.ud i{width:9px;background:#bbb;color:#222;font-size:8px;text-align:center}
.rd-b{width:9px;height:9px;margin:0 0 0 4px;background:#2a5a9c;border:2px solid #ccc}
.ul-sb{height:17px;background:#f0f0f0;display:flex;align-items:center;justify-content:space-between;padding:0 6px;font-size:8px;color:#333;position:relative}
.ul-sb i{display:block;position:absolute;left:16px;top:1px;width:435px;height:14px;background:linear-gradient(#eee,#bbb);text-align:center;line-height:14px;border-radius:2px}
.ul-b{display:flex;margin-top:1px;gap:4px}
.ul-b .btn2{height:19px;font-size:10.500px;line-height:16px;font-weight:600;border-radius:5px;letter-spacing:-.3px}
.b1{width:56px}.b2{width:35px}.b3{width:77px}.b4{width:80px}.b5{width:70px}.b6{width:72px}.b7{width:55px}

/* bulk */
.bl{margin-left:6px;width:153px;height:202px;padding:0 6px 0 6px;font-size:5px}
.bl-t{height:13px;font-size:7.500px;line-height:14px;color:#555}
.bl-p{width:140px;height:184px;background:#ececec;border-radius:3px;padding:6px 5px 0}
.bl-tab{width:20px;height:8px;background:#fff;border-top:1px solid #f0a030;font-size:4.500px;line-height:7px;text-align:center;color:#777}
.bl-g{width:130px;height:138px;background:#fff;border:1px solid #aaa;padding:3px 0 0 4px;position:relative;overflow:hidden}
.bl-r{display:grid;grid-template-columns:12px 40px 26px 26px 12px;height:9.300px;line-height:8px;border-bottom:1px solid #888;text-align:center;color:#555;font-size:4.500px}
.bl-r>span{border-right:1px solid #888;overflow:hidden;white-space:nowrap}
.bl-h{background:#14204f;color:#ddd;font-weight:700}
.bl-h>span{border-right-color:#ccc}
.ck{display:block;width:6px;height:6px;margin:1px auto 0;border:1px solid #aaa;background:#eee}
.ck-on{background:#6a82b8}
.bl-sb{position:absolute;left:0;right:0;bottom:1px;height:5px;background:#eee}
.bl-sb i{display:block;margin-left:9px;width:50px;height:5px;background:#c6c6c6}
.bl-b{display:flex;flex-wrap:wrap;gap:1px 2px;margin:9px 0 0 3px;width:110px}
.bl-b .btn{height:8px;font-size:4.800px;line-height:5px;padding:0 4px;white-space:nowrap}

/* weight statement */
.wt{margin-left:6px;width:484px;height:252px;padding:0 6px;font-size:9px;color:#222}
.wt-t{height:28px;margin-left:1px;width:463px;border-bottom:2px solid #888;text-align:center;font-size:18px;font-weight:700;line-height:26px;color:#111}
.wt-m{display:flex;margin-top:11px;height:94px}
.wt-l{width:284px;display:flex;flex-direction:column;gap:6px}
.wt-row{display:flex;gap:10px;height:13px}
.wf{display:flex;height:13px;border:1px solid #bbb;box-shadow:0 1px 0 #ccc;line-height:11px;font-size:8.800px;color:#555;letter-spacing:.2px}
.wf b{display:block;color:#222;padding-left:2px;border-right:1px solid #777;margin-right:2px;flex:none}
.wf-f{width:106px}.wf-f b{width:43px}
.wf-d{width:148px}.wf-d b{width:74px}
.wf-p{width:232px}.wf-p b{width:116px}
.wf-s{width:169px}.wf-s b{width:85px}
.wf-o{width:191px}.wf-o b{width:96px}
.wf-c{width:149px}.wf-c b{width:64px}
.wt-r{width:177px;margin-left:0;height:81px;border-left:2px solid #666;padding-left:9px;display:flex;flex-direction:column;gap:18px}
.wf-n{width:159px}.wf-n b{width:63px}
.wf-r{width:159px}.wf-r b{width:84px}
.wt-fp{font-size:8.800px;margin:6px 0 0 2px;color:#222}
.wt-h{margin:13px 0 0 3px;width:168px;height:14px;border-bottom:2px solid #777;font-size:11px;font-weight:700;line-height:11px;color:#111}
.wf-st{width:96px;margin-top:3px;padding-left:2px;font-size:10.500px}
.wt-sig{display:flex;align-items:flex-end;margin:42px 0 0 3px;font-size:8.800px;height:12px}
.wt-sig i{display:block;width:136px;border-bottom:1px solid #777;margin-left:17px}
.wf-dt{width:201px;margin-top:6px;height:12px;border-bottom:0}
.wf-dt b{width:29px}

/* export manifest */
.em{margin-left:4.500px;width:691px;height:460.500px;padding-left:13px;color:#777}
.g{color:#777}
.em-t{margin-top:5px;width:671px;height:24px;border-bottom:1px solid #aaa;font-family:"Open Sans",sans-serif;font-size:16.500px;font-weight:600;line-height:22px;color:#444;letter-spacing:-.6px}
.em-f{display:flex;align-items:center;height:18px;margin-top:6px;font-size:10.500px;letter-spacing:-.4px;font-family:"Open Sans",sans-serif}
.ef{display:block;height:18px;border:1px solid #ddd;background:#fff;line-height:16px;font-size:9.500px;padding-left:1px;color:#555}
.e1{width:30px;margin-left:2px}.e2{width:36px;margin-left:4px}.e3{width:57px;margin-left:9px}
.cal-l{margin-left:3px;width:11px;height:15px}
.e-or{margin-left:19px}.e-aw{margin-left:8px}
.e4{width:38px;margin-left:2px}.e5{width:64px;margin-left:6px}.e-dp{margin-left:15px}
.e-fra{margin-left:4px;color:#444;font-size:12px}
.e6{width:99px;margin-left:2px}
.em-b{display:flex;gap:3px;margin:1px 0 0 1px}
.em-b .btn2,.em-pou .btn2,.em-v .btn2{height:19px;font-size:10px;letter-spacing:-.4px;line-height:15px}
.eb1{width:24px}.eb2{width:31px}
.em-fd{display:flex;align-items:center;margin-top:25px;width:673px;height:40px;border:2px solid #7cc3d6;padding-left:4px;font-family:"Open Sans",sans-serif;font-size:10.500px;letter-spacing:-.5px}
.em-pill{display:flex;flex:none;align-items:center;gap:2px;width:69px;height:27px;background:#555;border-radius:5px;color:#fff;padding-left:4px;white-space:nowrap;font-size:10px;letter-spacing:-.7px}
.em-rt{margin-left:5px;width:168px}
.em-tl{width:29px}
.em-eg{margin-left:15px;width:55px}
.em-nf{margin-top:14px;height:13px;font:700 11.500px/13px "Open Sans",sans-serif;color:#2f8a2a;letter-spacing:-.5px}
.em-hd{display:flex;margin-top:7px;height:21px;font:14.500px/21px "Open Sans",sans-serif;letter-spacing:-.9px;color:#555}
.em-hd .h1{width:189px}
.em-m{display:flex;margin-top:0}
.em-l{width:185px;height:260px;background:#f0f0f0;border-radius:4px 0 0 0;padding:10px 0 0 7px}
.em-pou{display:flex;align-items:center;height:19px;font:10.500px "Open Sans",sans-serif;letter-spacing:-.4px}
.esel{display:flex;flex:none;justify-content:space-between;width:38px;height:19px;border:1px solid #ddd;background:#fff;line-height:17px;font-size:9px;letter-spacing:-.3px;color:#555;padding-left:2px}
.esel i{width:11px;background:#ccc;text-align:center;font-size:9px;color:#222}
.e-s1{width:30px;margin:0 0 0 3px}
.e-lb{margin-left:9px;margin-right:3px}
.em-tabs{display:flex;gap:2px;margin-top:11px;height:18px;font:10px/18px "Open Sans",sans-serif;letter-spacing:-.4px}
.em-tabs span{padding:0 3px;border:1px solid #ccc;border-bottom:0;background:#e4e4e4;width:25px;text-align:center}
.em-tabs .on{background:#fff;border-top:2px solid #f0a030}
.em-g{position:relative;width:171px;height:180px;background:#fff;border:1px solid #aaa;padding:8px 0 0 6px;font-family:"Open Sans",sans-serif;overflow:hidden}
.eg-r{display:grid;grid-template-columns:18px 47px 34px 38px 17px;height:23px;border-bottom:1px solid #777;line-height:22px;text-align:center;font-size:8.500px;letter-spacing:-.5px;color:#666}
.eg-r>span{border-right:1px solid #777;overflow:hidden;white-space:nowrap}
.eg-h{background:#14204f;color:#ddd;font-size:9.500px;letter-spacing:-.7px}
.ck-w{background:#fff;width:9px;height:13px;margin-top:5px}
.ck-g{background:#ddd;width:9px;height:13px;margin-top:5px}
.eg-sb{position:absolute;left:0;right:0;bottom:1px;height:15px;background:#eee}
.eg-sb i{display:block;margin-left:12px;width:116px;height:15px;background:linear-gradient(#eee,#bbb)}
.em-rr{width:477px;padding:10px 0 0 11px;background:#fff}
.em-v{display:flex;align-items:center;gap:2px;height:19px;font:10.500px "Open Sans",sans-serif;letter-spacing:-.5px}
.em-cv{margin-left:26px}
.em-box{margin-top:12px;width:469px;height:179px;border:1px solid #666;background:#fff}
.em-bb{display:flex;gap:4px;margin-top:10px}
.em-bb .btn2{height:22px;font-size:9.500px;letter-spacing:-.5px;line-height:19px}
.eb3{width:38px}.eb4{width:44px}.eb5{width:69px}

/* manifest */
.mf{margin:16.500px 0 0 10px;width:399px;height:252px;font-size:6.300px;color:#555;padding-left:1px}
.mf-top{display:flex;align-items:center;height:26px;padding:0 0 3px 147px}
.mf-ti{font-size:9.800px;color:#222;width:100px;letter-spacing:-.3px}
.mf-lg{flex:none;margin-top:4px}
.mf-lu{font-size:19.500px;font-weight:700;color:#141e6e;margin-left:2px;letter-spacing:-.6px;line-height:26px;margin-top:3px}
.mf-own{margin:6px 0 0 7px;height:8px;line-height:8px}
.mf-l1{display:flex;margin:20px 0 0 7px;height:8px;line-height:8px}
.a1{width:106px}.a2{width:157px}
.mf-l2{display:flex;margin:9px 0 0 7px;height:8px;line-height:8px}
.a3{width:118px}
.mf-sec{margin:0 0 0 1px;height:8px;line-height:8px;font-weight:700;color:#222}
.mf-s1{margin-top:25px}
.mf-g{display:grid;grid-template-columns:60px 22px 120px 25px 50px 70px 48px;margin-left:1px;height:11px;line-height:11px;text-align:center}
.mf-gh{height:33px;margin-top:3px;font-weight:700;color:#222;line-height:10.800px;align-items:start}
.mf-bk{height:12px;margin-top:-1px}
.mf-tt{margin-top:11px;height:17px}
.mf-tt b{color:#222}
.bits{display:flex;height:4px;margin:33px 0 0 10px;position:relative;align-items:flex-end}
.bits i{display:block;height:4px}
.b-a{width:1px;background:#999}
.b-b{width:78px;margin-left:18px;background:repeating-linear-gradient(90deg,#777 0 2px,#ddd 2px 3px,#999 3px 5px,#eee 5px 6px)}
.b-c{margin-left:9px}
.b-d{margin-left:338px}
.b-e{margin-left:13px}

/* foot */
.foot{display:flex;height:50px;margin-left:50px;align-items:flex-start}
.foot-l{flex:none;width:253px;height:19px;border-bottom:0;position:relative;background:linear-gradient(#0a70e0,#0a70e0) 0 13px/253px 1px no-repeat}
.foot-l::before{content:"";position:absolute;left:3px;top:0;width:2px;height:19px;background:#0a78f5}
.foot-d{flex:none;margin-left:3px;width:4px;height:36px;background:linear-gradient(#5a9ae8 60%,#fff);box-shadow:-1px 0 2px #ccc}
.hs{flex:none;margin:9px 0 0 6px;width:744px;height:15px;background:#ececec;border-top:1px solid #ddd;padding:2px 0 0 2px}
.hs i{display:block;width:726px;height:10px;background:#d6d6d6;border:1px solid #aaa;border-radius:2px}
.foot-r{flex:none;margin-left:18px;width:2px;height:11px;background:#0a78f5}
```
